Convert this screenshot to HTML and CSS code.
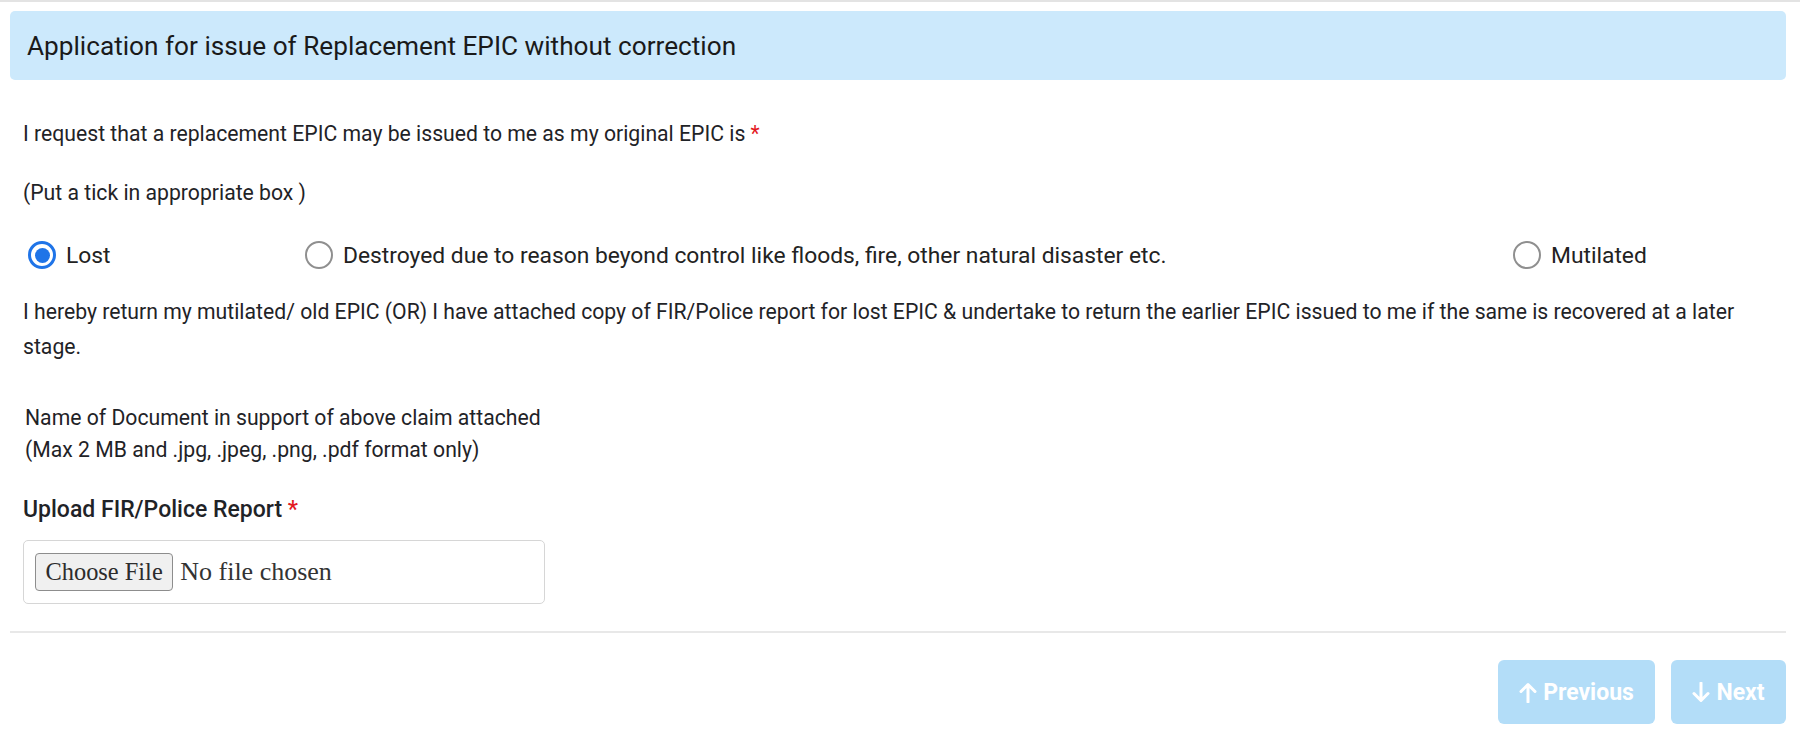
FILE: index.html
```html
<!DOCTYPE html>
<html lang="en">
<head>
<meta charset="utf-8">
<title>Replacement EPIC</title>
<link rel="stylesheet" href="styles.css">
</head>
<body>
<div class="card">
  <div class="header">Application for issue of Replacement EPIC without correction</div>
  <div class="content">
    <p class="line q">I request that a replacement EPIC may be issued to me as my original EPIC is <span class="req">*</span></p>
    <p class="line hint">(Put a tick in appropriate box )</p>
    <div class="radios">
      <label class="radio"><span class="dot checked"></span><span>Lost</span></label>
      <label class="radio"><span class="dot"></span><span>Destroyed due to reason beyond control like floods, fire, other natural disaster etc.</span></label>
      <label class="radio"><span class="dot"></span><span>Mutilated</span></label>
    </div>
    <p class="para">I hereby return my mutilated/ old EPIC (OR) I have attached copy of FIR/Police report for lost EPIC &amp; undertake to return the earlier EPIC issued to me if the same is recovered at a later stage.</p>
    <p class="doc">Name of Document in support of above claim attached<br>(Max 2 MB and .jpg, .jpeg, .png, .pdf format only)</p>
    <p class="upload-label">Upload FIR/Police Report <span class="req">*</span></p>
    <div class="file-box">
      <button class="file-btn" type="button">Choose File</button>
      <span class="file-name">No file chosen</span>
    </div>
  </div>
  <div class="footer">
    <button class="nav-btn prev" type="button">
      <svg width="18" height="21" viewBox="0 0 18 21"><path d="M9 20V3M2 9.5L9 2.5l7 7" fill="none" stroke="#fff" stroke-width="3" stroke-linecap="round" stroke-linejoin="round"/></svg>
      <span>Previous</span>
    </button>
    <button class="nav-btn next" type="button">
      <svg width="18" height="21" viewBox="0 0 18 21"><path d="M9 1v17M2 11.5l7 7 7-7" fill="none" stroke="#fff" stroke-width="3" stroke-linecap="round" stroke-linejoin="round"/></svg>
      <span>Next</span>
    </button>
  </div>
</div>
</body>
</html>
```

FILE: styles.css
```css
html, body {
  margin: 0;
  padding: 0;
  background: #ffffff;
}

body {
  font-family: Roboto, "Liberation Sans", Arial, sans-serif;
  color: #1f2327;
  width: 1800px;
  height: 740px;
  overflow: hidden;
}

.card {
  border-top: 2px solid #e3e3e3;
  padding: 9px 14px 0 10px;
}

.header {
  height: 69px;
  background: #cce9fc;
  border-radius: 5px;
  display: flex;
  align-items: center;
  padding-left: 17px;
  font-size: 26.2px;
  color: #1a1a1a;
  font-weight: 400;
}

.content {
  padding-left: 13px;
  font-size: 21.2px;
}

p {
  margin: 0;
}

.line {
  line-height: 30px;
}

.q {
  margin-top: 39px;
}

.hint {
  margin-top: 29px;
}

.req {
  color: #e3191f;
}

.radios {
  margin-top: 32px;
  margin-left: 5px;
  display: grid;
  grid-template-columns: 277px 1208px auto;
  height: 30px;
  align-items: center;
  font-size: 22.8px;
}

.radio {
  display: flex;
  align-items: center;
  gap: 10px;
  color: #222;
}

.dot {
  box-sizing: border-box;
  width: 28px;
  height: 28px;
  border-radius: 50%;
  border: 2.5px solid #8f8f8f;
  background: #fff;
  display: flex;
  align-items: center;
  justify-content: center;
  flex: none;
}

.dot.checked {
  border: 3px solid #1f74e8;
}

.dot.checked::after {
  content: "";
  width: 15px;
  height: 15px;
  border-radius: 50%;
  background: #1f74e8;
}

.para {
  margin-top: 24px;
  line-height: 35px;
  padding-right: 20px;
}

.doc {
  margin-top: 38px;
  margin-left: 2px;
  line-height: 32px;
}

.upload-label {
  margin-top: 29px;
  line-height: 30px;
  font-weight: 500;
  font-size: 23px;
}

.file-box {
  box-sizing: border-box;
  margin-top: 15px;
  width: 522px;
  height: 64px;
  border: 1.5px solid #d6d6d6;
  border-radius: 5px;
  display: flex;
  align-items: center;
  padding-left: 11px;
  gap: 7px;
  font-family: "Liberation Serif", "Times New Roman", serif;
}

.file-btn {
  box-sizing: border-box;
  height: 38px;
  padding: 0 9.5px;
  font-family: "Liberation Serif", "Times New Roman", serif;
  font-size: 24.4px;
  color: #2c2c2c;
  background: #f0f0f0;
  border: 1.5px solid #8d8d8d;
  border-radius: 4px;
}

.file-name {
  font-size: 26px;
  color: #333;
}

.footer {
  margin-top: 27px;
  border-top: 2px solid #e8e8e8;
  padding-top: 27px;
  display: flex;
  justify-content: flex-end;
  gap: 16px;
}

.nav-btn {
  box-sizing: border-box;
  height: 64px;
  border: none;
  border-radius: 6px;
  background: #b3ddf8;
  color: #ffffff;
  font-family: Roboto, "Liberation Sans", Arial, sans-serif;
  font-weight: 700;
  font-size: 23px;
  display: flex;
  align-items: center;
  justify-content: center;
  gap: 6px;
}

.prev {
  width: 157px;
}

.next {
  width: 115px;
}
```
